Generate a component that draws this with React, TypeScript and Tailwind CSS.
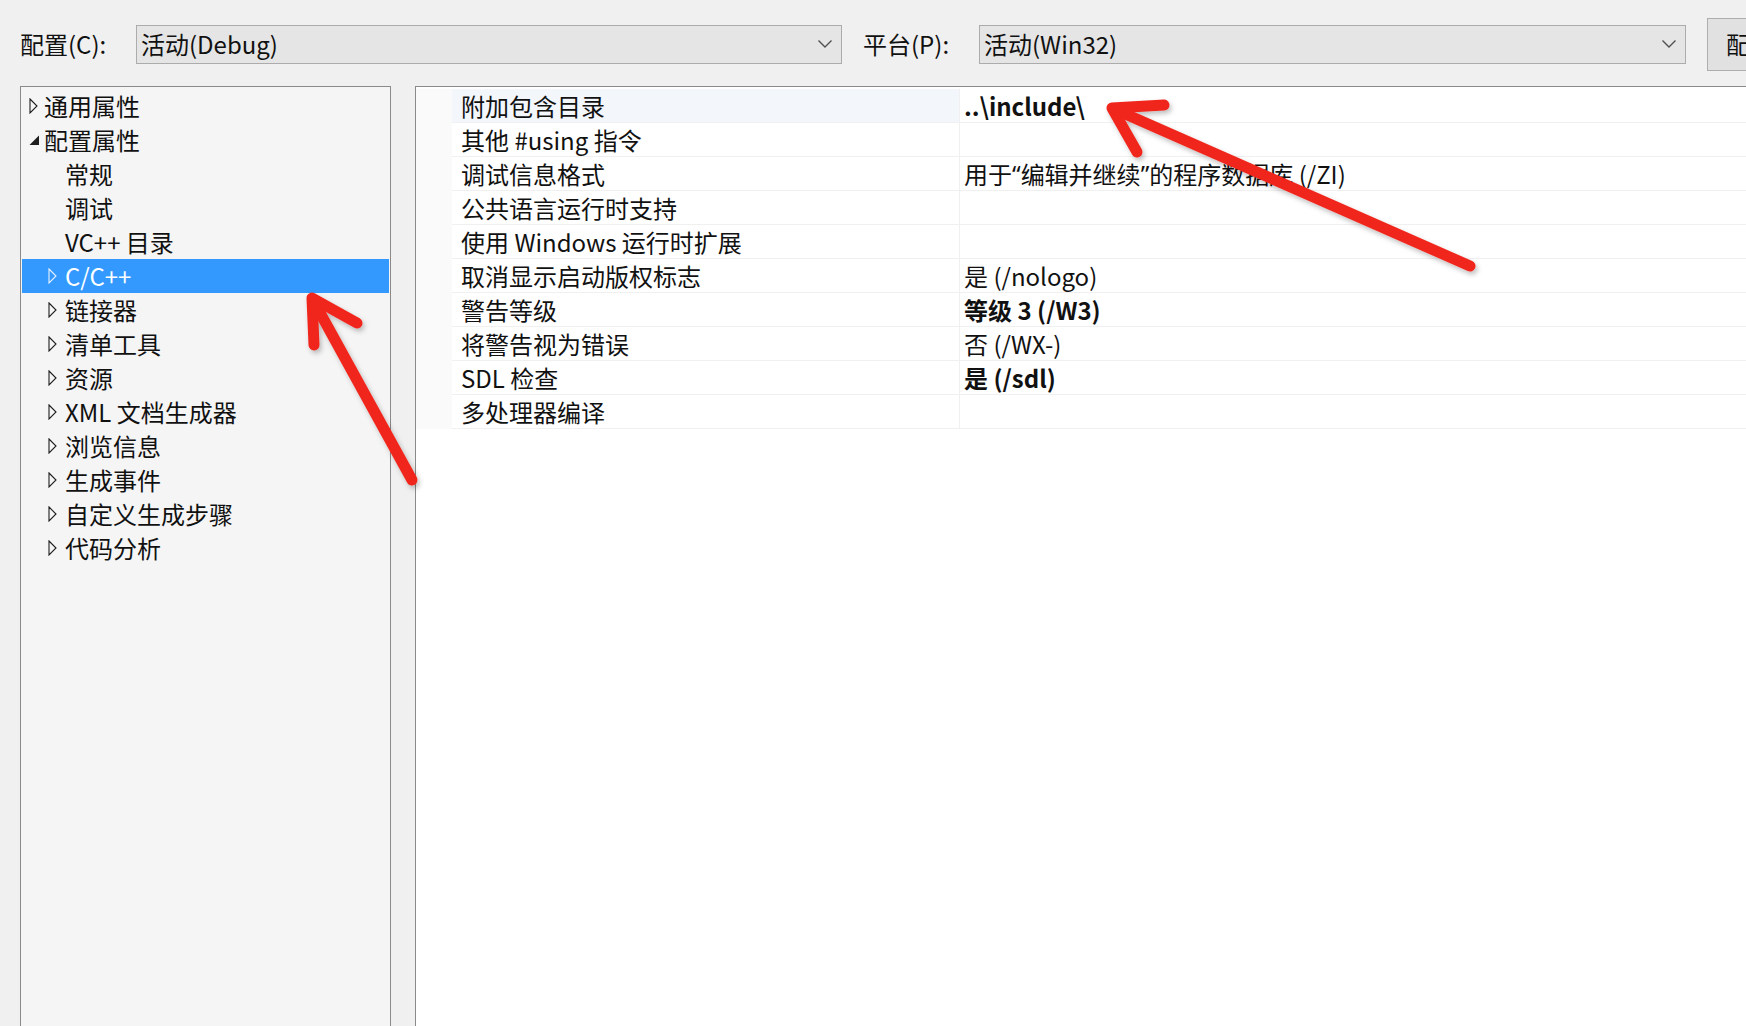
import React from "react";

type TreeItem = {
  label: string;
  level: 0 | 1;
  state: "collapsed" | "expanded" | "leaf";
  selected?: boolean;
};

const treeItems: TreeItem[] = [
  { label: "通用属性", level: 0, state: "collapsed" },
  { label: "配置属性", level: 0, state: "expanded" },
  { label: "常规", level: 1, state: "leaf" },
  { label: "调试", level: 1, state: "leaf" },
  { label: "VC++ 目录", level: 1, state: "leaf" },
  { label: "C/C++", level: 1, state: "collapsed", selected: true },
  { label: "链接器", level: 1, state: "collapsed" },
  { label: "清单工具", level: 1, state: "collapsed" },
  { label: "资源", level: 1, state: "collapsed" },
  { label: "XML 文档生成器", level: 1, state: "collapsed" },
  { label: "浏览信息", level: 1, state: "collapsed" },
  { label: "生成事件", level: 1, state: "collapsed" },
  { label: "自定义生成步骤", level: 1, state: "collapsed" },
  { label: "代码分析", level: 1, state: "collapsed" },
];

type Prop = { name: string; value: React.ReactNode; bold?: boolean };

const Q = ({ c }: { c: string }) => (
  <span style={{ fontFamily: '"Noto Sans", sans-serif' }}>{c}</span>
);

const props: Prop[] = [
  { name: "附加包含目录", value: "..\\include\\", bold: true },
  { name: "其他 #using 指令", value: "" },
  {
    name: "调试信息格式",
    value: (
      <>
        用于<Q c="“" />编辑并继续<Q c="”" />的程序数据库 (/ZI)
      </>
    ),
  },
  { name: "公共语言运行时支持", value: "" },
  { name: "使用 Windows 运行时扩展", value: "" },
  { name: "取消显示启动版权标志", value: "是 (/nologo)" },
  { name: "警告等级", value: "等级 3 (/W3)", bold: true },
  { name: "将警告视为错误", value: "否 (/WX-)" },
  { name: "SDL 检查", value: "是 (/sdl)", bold: true },
  { name: "多处理器编译", value: "" },
];

const Chevron = () => (
  <svg width="16" height="10" viewBox="0 0 16 10" className="shrink-0">
    <path d="M1.5 1.5 L8 8 L14.5 1.5" fill="none" stroke="#505050" strokeWidth="1.4" />
  </svg>
);

const Expander = ({ state, selected }: { state: TreeItem["state"]; selected?: boolean }) => {
  if (state === "leaf") return <span className="w-[15px] shrink-0" />;
  if (state === "expanded")
    return (
      <span className="w-[15px] shrink-0 flex items-center">
        <svg width="10" height="10" viewBox="0 0 10 10">
          <path d="M10 0.5 L10 10 L0.5 10 Z" fill="#1e1e1e" />
        </svg>
      </span>
    );
  return (
    <span className="w-[15px] shrink-0 flex items-center">
      <svg width="9" height="16" viewBox="0 0 9 16">
        <path
          d="M1 1 L8 8 L1 15 Z"
          fill="none"
          stroke={selected ? "#e6f1ff" : "#1e1e1e"}
          strokeWidth="1.1"
          strokeLinejoin="miter"
        />
      </svg>
    </span>
  );
};

const Combo = ({ text, width }: { text: string; width: string }) => (
  <div
    className={`${width} shrink-0 h-[39px] bg-[#e5e5e5] border border-[#acacac] flex items-center justify-between pl-[4px] pr-[8px]`}
  >
    <span className="text-[24px] leading-none text-[#111]">{text}</span>
    <Chevron />
  </div>
);

export default function App() {
  return (
    <div
      className="relative w-[1746px] h-[1026px] overflow-hidden bg-[#f0f0f0] text-[#111]"
      style={{ fontFamily: '"Noto Sans CJK SC", "Noto Sans", sans-serif' }}
    >
      {/* top bar */}
      <div className="h-[86px] flex items-center pl-[20px] pt-[2px] overflow-hidden">
        <span className="w-[116px] shrink-0 text-[24px] leading-none">配置(C):</span>
        <Combo text="活动(Debug)" width="w-[706px]" />
        <span className="ml-[21px] w-[116px] shrink-0 text-[24px] leading-none">平台(P):</span>
        <Combo text="活动(Win32)" width="w-[707px]" />
        <div className="ml-[21px] h-[53px] w-[140px] shrink-0 bg-[#e1e1e1] border border-[#adadad] flex items-center pl-[18px] text-[24px] whitespace-nowrap">
          配置管理器
        </div>
      </div>

      {/* body */}
      <div className="flex h-[940px]">
        {/* tree */}
        <div className="ml-[20px] w-[371px] shrink-0 border border-[#8a8a8a] border-b-0 bg-[#f5f5f5] p-px pt-[2px]">
          {treeItems.map((it) => (
            <div
              key={it.label}
              className={`h-[34px] flex items-center text-[24px] leading-none ${
                it.selected ? "bg-[#3399ff] text-white" : ""
              } ${it.level === 0 ? "pl-[7px]" : "pl-[26px]"}`}
            >
              <Expander state={it.state} selected={it.selected} />
              <span className={it.level === 0 ? "" : "pl-[2px]"}>{it.label}</span>
            </div>
          ))}
        </div>

        {/* property grid */}
        <div className="ml-[24px] flex-1 border-l border-t border-[#8a8a8a] bg-white pt-[2px]">
          {props.map((p, i) => (
            <div key={p.name} className="h-[34px] flex">
              <div className="w-[36px] shrink-0 bg-[#fafafa]" />
              <div
                className={`w-[508px] shrink-0 flex items-center pl-[9px] text-[24px] leading-none border-b border-r border-[#f0f0f0] ${
                  i === 0 ? "bg-[#f3f6fb]" : "bg-white"
                }`}
              >
                {p.name}
              </div>
              <div
                className={`flex-1 flex items-center pl-[4px] text-[24px] leading-none border-b border-[#f0f0f0] whitespace-pre ${
                  p.bold ? "font-bold" : ""
                }`}
              >
                {p.value}
              </div>
            </div>
          ))}
        </div>
      </div>

      {/* annotation arrows */}
      <svg className="absolute inset-0 pointer-events-none" width="1746" height="1026" viewBox="0 0 1746 1026">
        <defs>
          <filter id="sh" x="-10%" y="-10%" width="120%" height="120%">
            <feDropShadow dx="2" dy="3" stdDeviation="2.5" floodColor="#000" floodOpacity="0.25" />
          </filter>
        </defs>
        <g
          filter="url(#sh)"
          stroke="#f0281e"
          strokeWidth="11"
          strokeLinecap="round"
          strokeLinejoin="round"
          fill="none"
        >
          <path d="M1470 266 L1114 109" />
          <path d="M1164 105 L1112 108 L1137 152" />
          <path d="M412 480 L313 300" />
          <path d="M357 323 L312 298 L314 345" />
        </g>
      </svg>
    </div>
  );
}
